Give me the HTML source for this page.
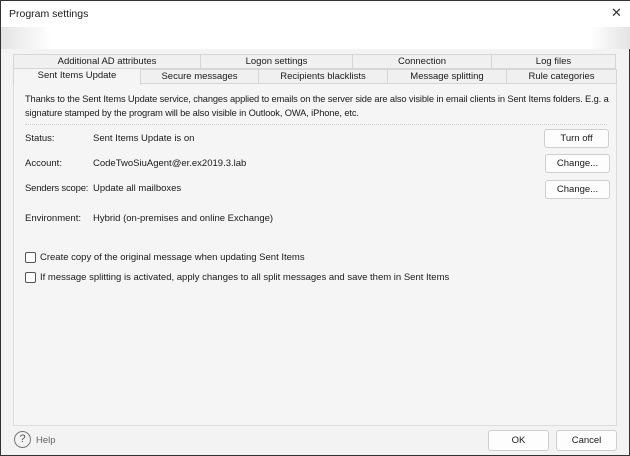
<!DOCTYPE html><html><head><style>
*{margin:0;padding:0;box-sizing:border-box}
body{width:630px;height:456px;background:#f3f3f3;font-family:"Liberation Sans",sans-serif;font-size:9.5px;color:#1a1a1a;position:relative;overflow:hidden;border:1px solid #333}
.a{position:absolute;white-space:nowrap}
.tab{position:absolute;border:1px solid #d6d6d6;background:#f0f0f0;text-align:center;line-height:14px;font-size:9.5px}
.btn{position:absolute;border:1px solid #cfcfcf;border-radius:3px;background:#fdfdfd;text-align:center;font-size:9.5px;line-height:17px}
.cb{position:absolute;width:11px;height:11px;border:1px solid #555;border-radius:2px;background:#fff}
</style></head><body>
<div class="a" style="left:0;top:0;width:630px;height:26px;background:#fff"></div>
<div class="a" style="left:8px;top:7px;font-size:10.5px">Program settings</div>
<div class="a" style="left:610px;top:4px;font-size:13px;color:#333">✕</div>
<div class="a" style="left:0;top:26px;width:630px;height:22px;background:linear-gradient(90deg,#e4e4e4 0,#fff 50px,#fff 590px,#e4e4e4 628px)"></div>
<div class="a" style="left:12px;top:82px;width:604px;height:343px;border:1px solid #dcdcdc;background:#f5f5f5"></div>
<div class="tab" style="left:12px;top:53px;width:188px;height:15px">Additional AD attributes</div>
<div class="tab" style="left:199px;top:53px;width:153px;height:15px">Logon settings</div>
<div class="tab" style="left:351px;top:53px;width:140px;height:15px">Connection</div>
<div class="tab" style="left:490px;top:53px;width:125px;height:15px">Log files</div>
<div class="tab" style="left:12px;top:67px;width:128px;height:17px;background:#f5f5f5;border-bottom:none;line-height:13px">Sent Items Update</div>
<div class="tab" style="left:139px;top:68px;width:119px;height:15px">Secure messages</div>
<div class="tab" style="left:257px;top:68px;width:130px;height:15px">Recipients blacklists</div>
<div class="tab" style="left:386px;top:68px;width:120px;height:15px">Message splitting</div>
<div class="tab" style="left:505px;top:68px;width:111px;height:15px">Rule categories</div>
<div class="a" style="left:24px;top:91px;line-height:14px;font-size:9.3px;letter-spacing:-0.12px">Thanks to the Sent Items Update service, changes applied to emails on the server side are also visible in email clients in Sent Items folders. E.g. a<br>signature stamped by the program will be also visible in Outlook, OWA, iPhone, etc.</div>
<div class="a" style="left:24px;top:123px;width:582px;border-top:1px dotted #ccc"></div>
<div class="a" style="left:24px;top:132px">Status:</div><div class="a" style="left:92px;top:132px">Sent Items Update is on</div>
<div class="a" style="left:24px;top:157px">Account:</div><div class="a" style="left:92px;top:157px">CodeTwoSiuAgent@er.ex2019.3.lab</div>
<div class="a" style="left:24px;top:182px;letter-spacing:-0.2px">Senders scope:</div><div class="a" style="left:92px;top:182px">Update all mailboxes</div>
<div class="a" style="left:24px;top:212px">Environment:</div><div class="a" style="left:92px;top:212px">Hybrid (on-premises and online Exchange)</div>
<div class="btn" style="left:543px;top:128px;width:65px;height:19px">Turn off</div>
<div class="btn" style="left:544px;top:153px;width:65px;height:19px">Change...</div>
<div class="btn" style="left:544px;top:179px;width:65px;height:19px">Change...</div>
<div class="cb" style="left:24px;top:251px"></div><div class="a" style="left:39px;top:251px">Create copy of the original message when updating Sent Items</div>
<div class="cb" style="left:24px;top:271px"></div><div class="a" style="left:39px;top:271px">If message splitting is activated, apply changes to all split messages and save them in Sent Items</div>
<div class="a" style="left:13px;top:430px;width:17px;height:17px;border:1.3px solid #777;border-radius:50%;text-align:center;line-height:15px;font-size:11px;color:#555">?</div>
<div class="a" style="left:35px;top:434px;color:#666">Help</div>
<div class="btn" style="left:487px;top:429px;width:61px;height:21px;line-height:19px">OK</div>
<div class="btn" style="left:555px;top:429px;width:61px;height:21px;line-height:19px">Cancel</div>
</body></html>
